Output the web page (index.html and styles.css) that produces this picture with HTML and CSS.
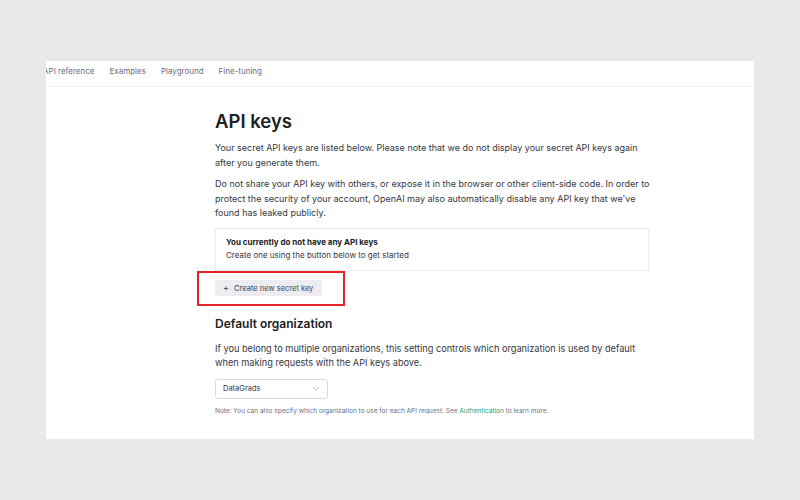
FILE: index.html
```html
<!DOCTYPE html>
<html lang="en">
<head>
  <meta charset="UTF-8">
  <title>API keys</title>
  <link rel="stylesheet" href="styles.css">
</head>
<body>
  <div class="panel">
    <nav class="topnav">
      <a href="#">API reference</a>
      <a href="#">Examples</a>
      <a href="#">Playground</a>
      <a href="#">Fine-tuning</a>
    </nav>

    <main class="content">
      <h1>API keys</h1>
      <p class="intro">Your secret API keys are listed below. Please note that we do not display your secret API keys again after you generate them.</p>
      <p class="intro">Do not share your API key with others, or expose it in the browser or other client-side code. In order to protect the security of your account, OpenAI may also automatically disable any API key that we've found has leaked publicly.</p>

      <div class="empty-box">
        <div class="empty-title">You currently do not have any API keys</div>
        <div class="empty-sub">Create one using the button below to get started</div>
      </div>

      <div class="highlight">
        <button class="btn-create"><span class="plus">+</span> Create new secret key</button>
      </div>

      <h2>Default organization</h2>
      <p class="org-text">If you belong to multiple organizations, this setting controls which organization is used by default when making requests with the API keys above.</p>

      <div class="select">
        <span>DataGrads</span>
        <svg width="8" height="5" viewBox="0 0 8 5"><path d="M1 1l3 3 3-3" fill="none" stroke="#b4b4bd" stroke-width="0.9"/></svg>
      </div>

      <p class="note">Note: You can also specify which organization to use for each API request. See <a href="#">Authentication</a> to learn more.</p>
    </main>
  </div>
</body>
</html>
```

FILE: styles.css
```css
body {
  margin: 0;
  background: #e9e9e9;
  font-family: Inter, "Noto Sans", sans-serif;
  color: #353740;
}

.panel {
  width: 708px;
  height: 378px;
  margin: 61px 0 0 46px;
  background: #fff;
  overflow: hidden;
}

.topnav {
  display: flex;
  gap: 15px;
  height: 26px;
  padding-top: 5px;
  box-sizing: border-box;
  border-bottom: 1px solid #f1f1f3;
  margin-left: -3px;
}

.topnav a {
  font-size: 8px;
  line-height: 10px;
  color: #6e6e80;
  text-decoration: none;
}

.content {
  width: 438px;
  margin-left: 169px;
  padding-top: 23px;
}

h1 {
  font-size: 18.5px;
  font-weight: 600;
  color: #202123;
  margin: 0 0 9px;
  line-height: 22px;
}

p {
  margin: 0;
}

.intro {
  font-size: 9px;
  line-height: 14.5px;
  margin-bottom: 7px;
}

.empty-box {
  width: 434px;
  height: 43px;
  border: 1px solid #ececf1;
  box-shadow: 0 0 3px rgba(0,0,0,0.04);
  padding: 7px 0 0 10px;
  box-sizing: border-box;
  margin-top: 4px;
}

.empty-title {
  font-size: 8px;
  font-weight: 700;
  color: #202123;
  line-height: 12px;
}

.empty-sub {
  font-size: 8px;
  line-height: 15px;
  color: #353740;
}

.highlight {
  width: 128px;
  margin: 0 0 0 -18px;
  padding: 7px 0 8px 16px;
  border: 2px solid #e3222a;
}

.btn-create {
  display: block;
  background: #ececf1;
  border: none;
  border-radius: 3px;
  font-family: inherit;
  font-size: 7.5px;
  color: #40414f;
  height: 16px;
  width: 107px;
  padding: 0 8px;
  text-align: left;
}

.btn-create .plus {
  margin-right: 3px;
  font-size: 9px;
}

h2 {
  font-size: 12px;
  font-weight: 600;
  color: #202123;
  margin: 10px 0 10px;
  line-height: 16px;
}

.org-text {
  font-size: 9.2px;
  line-height: 14px;
  margin-bottom: 9px;
}

.select {
  display: flex;
  align-items: center;
  justify-content: space-between;
  width: 113px;
  height: 20px;
  padding: 0 7px;
  box-sizing: border-box;
  border: 1px solid #d9d9e3;
  border-radius: 3px;
  font-size: 7.5px;
  color: #353740;
}

.note {
  font-size: 6.5px;
  line-height: 10px;
  color: #6e6e80;
  margin-top: 7px;
}

.note a {
  color: #10a37f;
  text-decoration: none;
}
```
